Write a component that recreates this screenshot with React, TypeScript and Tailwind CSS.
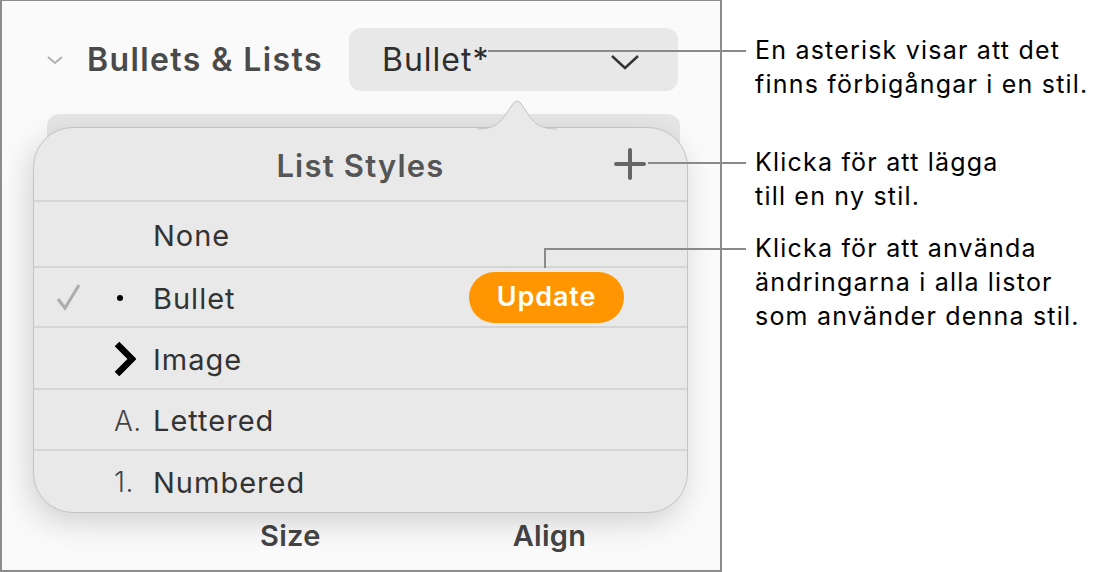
import React from 'react';

const font = { fontFamily: 'Inter, "Noto Sans", sans-serif' };

interface Row {
    label: string;
    marker: React.ReactNode;
    checked: boolean;
    update: boolean;
    h: string;
}

const rows: Row[] = [
    { label: 'None', marker: null, checked: false, update: false, h: 'h-[66px]' },
    {
        label: 'Bullet',
        marker: <span className="ml-[3px] block h-[6px] w-[6px] rounded-full bg-black" />,
        checked: true,
        update: true,
        h: 'h-[60px]',
    },
    {
        label: 'Image',
        marker: (
            <svg width="22" height="34" viewBox="0 0 22 34">
                <path d="M3 2 L18 17 L3 32" fill="none" stroke="#000" strokeWidth="6.5" strokeLinejoin="miter" />
            </svg>
        ),
        checked: false,
        update: false,
        h: 'h-[62px]',
    },
    {
        label: 'Lettered',
        marker: <span className="text-[28px] font-light tracking-[0.5px] text-[#444]">A.</span>,
        checked: false,
        update: false,
        h: 'h-[61px]',
    },
    {
        label: 'Numbered',
        marker: <span className="text-[28px] font-light tracking-[0.5px] text-[#444]">1.</span>,
        checked: false,
        update: false,
        h: 'h-[62px]',
    },
];

const App: React.FC = () => {
    return (
        <div className="relative flex h-[572px] w-[1096px] overflow-hidden bg-white" style={font}>
            {/* screenshot panel */}
            <div className="relative h-[572px] w-[722px] shrink-0 border-t border-r-2 border-b-2 border-l-2 border-[#8c8c8c] bg-[#fafafa]">
                <div className="flex h-[90px] items-center pt-[27px]">
                    <svg className="ml-[42px] shrink-0" width="22" height="14" viewBox="0 0 22 14">
                        <path d="M4 4 L11 10 L18 4" fill="none" stroke="#b0b0b0" strokeWidth="2" />
                    </svg>
                    <div className="ml-[21px] w-[262px] shrink-0">
                        <span className="text-[32px] font-semibold tracking-[1.4px] text-[#4a4a4a]">Bullets &amp; Lists</span>
                    </div>
                    <div className="flex h-[63px] w-[329px] items-center justify-between rounded-[12px] bg-[#e8e8e8] pl-[33px] pr-[38px]">
                        <span className="text-[32px] tracking-[1px] text-[#2e2e2e]">Bullet*</span>
                        <svg className="mt-[4px]" width="30" height="18" viewBox="0 0 30 18">
                            <path d="M2 3 L15 15 L28 3" fill="none" stroke="#333" strokeWidth="2.4" />
                        </svg>
                    </div>
                </div>

                {/* underlying controls */}
                <div className="ml-[45px] mt-[23px] h-[388px] w-[633px] rounded-[12px] bg-[#e6e6e6]" />
                <div className="flex pt-[12px]">
                    <span className="ml-[258px] text-[29px] font-semibold tracking-[0.3px] text-[#444]">Size</span>
                    <span className="ml-[192px] text-[29px] font-semibold tracking-[0.3px] text-[#444]">Align</span>
                </div>

                {/* popover */}
                <div className="absolute left-[31px] top-[126px] h-[386px] w-[655px] rounded-[40px] border border-[#c4c4c4] bg-[#e9e9e9] shadow-[-4px_10px_30px_rgba(0,0,0,0.16)]">
                    <svg className="absolute left-[443px] top-[-32px]" width="80" height="34" viewBox="0 0 80 34">
                        <path d="M0 33 C15 33 21 29 27 21 L35 9 Q40 1 45 9 L53 21 C59 29 65 33 80 33 L80 34 L0 34 Z" fill="#e9e9e9" />
                        <path d="M0 33 C15 33 21 29 27 21 L35 9 Q40 1 45 9 L53 21 C59 29 65 33 80 33" fill="none" stroke="#c4c4c4" strokeWidth="1" />
                    </svg>
                    <div className="relative flex h-[72px] items-center justify-center">
                        <span className="mt-[4px] text-[31px] font-semibold tracking-[1.2px] text-[#555]">List Styles</span>
                        <svg className="absolute left-[579px] top-[19px]" width="34" height="34" viewBox="0 0 34 34">
                            <path d="M17 3 V31 M3 17 H31" stroke="#666" strokeWidth="4" strokeLinecap="round" />
                        </svg>
                    </div>
                    {rows.map((r) => (
                        <div key={r.label} className={`relative flex items-center border-t-2 border-[#d5d5d5] ${r.h}`}>
                            <div className="flex w-[80px] pl-[21px]">
                                {r.checked && (
                                    <svg width="28" height="28" viewBox="0 0 28 28">
                                        <path d="M3 16 L10 25 L24 2" fill="none" stroke="#adadad" strokeWidth="3" />
                                    </svg>
                                )}
                            </div>
                            <div className="flex w-[39px] items-center pt-[2px]">{r.marker}</div>
                            <span className="pt-[3px] text-[29px] tracking-[1px] text-[#333]">{r.label}</span>
                            {r.update && (
                                <span className="absolute left-[435px] top-[4px] flex h-[51px] w-[155px] items-center justify-center rounded-full bg-[#ff9500] text-[27px] font-semibold tracking-[0.9px] text-white">
                                    Update
                                </span>
                            )}
                        </div>
                    ))}
                </div>
            </div>

            {/* callout texts */}
            <div className="flex flex-col pl-[33px] text-[25px] leading-[34px] tracking-[1.2px] text-black">
                <p className="mt-[33px]">
                    En asterisk visar att det
                    <br />
                    finns förbigångar i en stil.
                </p>
                <p className="mt-[44px]">
                    Klicka för att lägga
                    <br />
                    till en ny stil.
                </p>
                <p className="mt-[18px]">
                    Klicka för att använda
                    <br />
                    ändringarna i alla listor
                    <br />
                    som använder denna stil.
                </p>
            </div>

            {/* callout lines */}
            <svg className="pointer-events-none absolute left-0 top-0" width="1096" height="572">
                <g stroke="#8a8a8a" strokeWidth="2" fill="none">
                    <path d="M488 51 H746" />
                    <path d="M648 163 H746" />
                    <path d="M545 268 V249 H746" />
                </g>
            </svg>
        </div>
    );
};

export default App;
